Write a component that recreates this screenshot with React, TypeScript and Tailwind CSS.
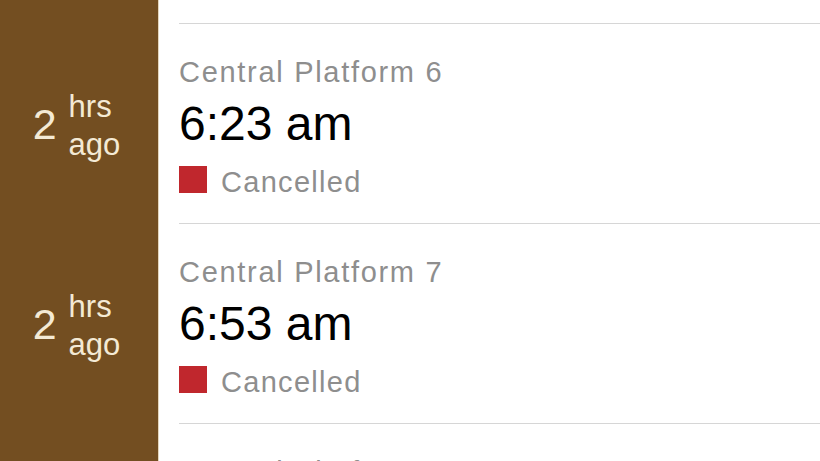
import React from "react";

type Row = { platform: string; time: string; status: string; ago: boolean };

const rows: Row[] = [
  { platform: "Central Platform 6", time: "6:23 am", status: "Cancelled", ago: true },
  { platform: "Central Platform 7", time: "6:53 am", status: "Cancelled", ago: true },
  { platform: "Central Platform 7", time: "7:23 am", status: "Cancelled", ago: false },
];

function Ago() {
  return (
    <div className="flex items-center justify-center pr-[5px] text-[#f4ead5]">
      <span className="text-[43px] leading-[42px]">2</span>
      <div className="ml-[12px] mt-[3px] flex flex-col text-[31px] leading-[38px]">
        <span>hrs</span>
        <span>ago</span>
      </div>
    </div>
  );
}

export default function App() {
  return (
    <div
      className="w-[820px] h-[461px] overflow-hidden bg-white"
      style={{ fontFamily: '"Liberation Sans", Arial, sans-serif' }}
    >
      {/* partial row above */}
      <div className="flex h-[24px]">
        <div className="w-[159px] shrink-0 bg-[#734e21] border-r border-[#e4d6bd]" />
        <div className="flex-1 pl-[20px]">
          <div className="h-full border-b border-[#d6d6d6]" />
        </div>
      </div>
      {rows.map((r, i) => (
        <div key={i} className="flex h-[200px]">
          <div className="w-[159px] shrink-0 bg-[#734e21] border-r border-[#e4d6bd] flex items-center justify-center">
            {r.ago && <Ago />}
          </div>
          <div className="flex-1 pl-[20px]">
            <div className="h-full border-b border-[#d6d6d6] pt-[31px]">
              <div className="text-[29px] leading-[34px] tracking-[1.7px] text-[#8e8e8e]">
                {r.platform}
              </div>
              <div className="mt-[9px] text-[48px] leading-[52px] text-black">
                {r.time}
              </div>
              <div className="mt-[15px] flex items-start">
                <div className="mt-[1px] w-[28px] h-[27px] bg-[#c0272d]" />
                <span className="ml-[14px] text-[29px] leading-[34px] tracking-[1.3px] text-[#8e8e8e]">
                  {r.status}
                </span>
              </div>
            </div>
          </div>
        </div>
      ))}
    </div>
  );
}
